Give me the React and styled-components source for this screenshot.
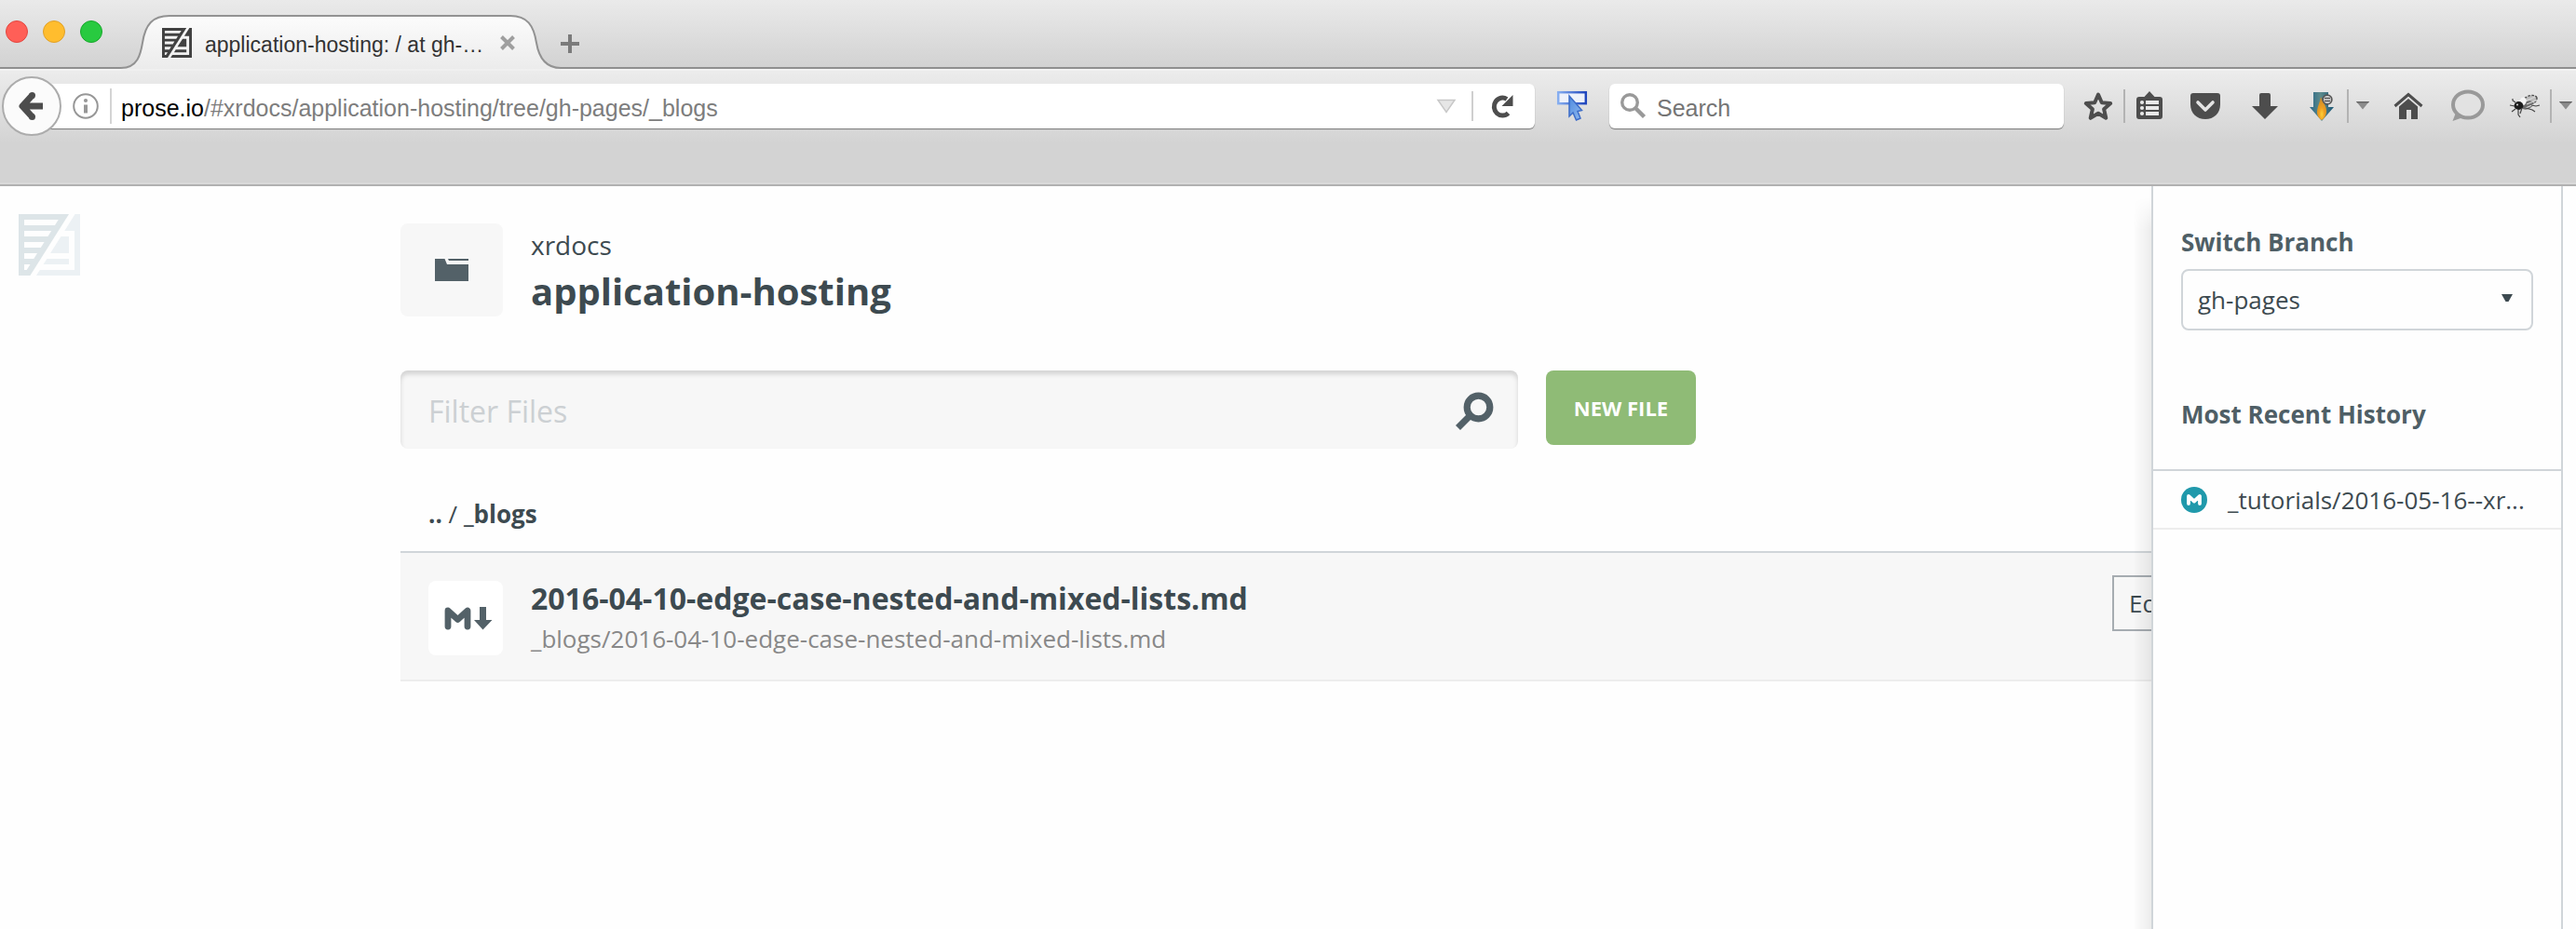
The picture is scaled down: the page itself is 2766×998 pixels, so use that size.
import React from "react";
import styled, { createGlobalStyle } from "styled-components";

const ink = "#3d4a50";
const slate = "#536168";
const line = "#d0d5d9";
const glyph = "#4d4d4d";

const GlobalStyle = createGlobalStyle`
  * { box-sizing: border-box; }
  body { margin: 0; background: #fefefe; overflow: hidden; }
  svg { display: block; flex: none; overflow: visible; }
  h1, h2, p { margin: 0; }
`;

const Window = styled.div`
  display: flex;
  flex-direction: column;
  width: 2766px;
  height: 998px;
  overflow: hidden;
  font-family: "Open Sans", sans-serif;
  color: ${ink};
`;

/* Browser chrome */

const TitleBar = styled.div`
  display: flex;
  flex: none;
  height: 74px;
  background: linear-gradient(#eaeaea, #d2d2d2 72px);
  border-bottom: 2px solid #8f8f8f;
  font-family: "Liberation Sans", sans-serif;
`;

const Lights = styled.div`
  display: flex;
  gap: 16px;
  width: 120px;
  padding: 22px 0 0 6px;
`;

const Light = styled.span`
  width: 24px;
  height: 24px;
  border-radius: 50%;
  background: ${(p) => p.$fill};
  border: 1px solid ${(p) => p.$edge};
`;

const Tab = styled.div`
  position: relative;
  display: flex;
  align-items: center;
  width: 482px;
  height: 76px;
  padding: 16px 0 0 54px;
`;

const TabShape = styled.svg`
  position: absolute;
  left: 0;
  top: 0;
`;

const TabTitle = styled.span`
  position: relative;
  width: 316px;
  margin-left: 14px;
  padding-top: 3px;
  font-size: 23px;
  line-height: 30px;
  white-space: nowrap;
  color: #333;
`;

const OnTab = styled.span`
  position: relative;
`;

const NewTab = styled.div`
  padding-top: 37px;
`;

const NavBar = styled.div`
  display: flex;
  flex: none;
  align-items: flex-start;
  height: 126px;
  padding: 14px 0 0 2px;
  background: linear-gradient(#ececec, #d3d3d3 78px);
  border-top: 2px solid #f3f3f3;
  border-bottom: 2px solid #b1b1b1;
  box-shadow: inset 0 -2px #d9d9d9;
  font-family: "Liberation Sans", sans-serif;
`;

const Tools = styled.div`
  display: flex;
  align-items: center;
  height: 48px;
`;

const BackButton = styled.div`
  position: relative;
  display: flex;
  align-items: center;
  justify-content: center;
  flex: none;
  width: 64px;
  height: 64px;
  border-radius: 50%;
  border: 2px solid #acacac;
  background: #fbfbfb;
`;

const Field = styled.div`
  display: flex;
  align-items: center;
  flex: none;
  width: ${(p) => p.$width}px;
  height: 48px;
  margin-left: ${(p) => p.$gap}px;
  padding-left: ${(p) => p.$pad}px;
  background: #fff;
  border-radius: 6px;
  box-shadow: 0 1px 1px rgba(0, 0, 0, 0.45);
  font-size: 25px;
  line-height: 32px;
  white-space: nowrap;
  color: #7d7d7d;
`;

const Address = styled.span`
  width: 1413px;
  margin-left: 10px;
  padding-top: 3px;
  b {
    font-weight: 400;
    color: #000;
  }
`;

const SearchLabel = styled.span`
  margin-left: 11px;
  padding-top: 3px;
  color: #757575;
`;

const Rule = styled.span`
  flex: none;
  width: 2px;
  height: ${(p) => p.$height || 36}px;
  margin-left: ${(p) => p.$gap}px;
  background: ${(p) => p.$color || "#b3b3b3"};
`;

const ToolIcon = styled.svg.attrs((p) => ({
  width: p.$w,
  height: 36,
  viewBox: `0 0 ${p.$w} 36`,
}))`
  margin-left: ${(p) => p.$gap}px;
`;

/* Page */

const Page = styled.div`
  display: flex;
  flex: 1;
  min-height: 0;
`;

const Rail = styled.div`
  flex: none;
  width: 430px;
  padding: 30px 0 0 20px;
`;

const Main = styled.main`
  flex: 1;
  min-width: 0;
  overflow: hidden;
  padding-top: 40px;
`;

const ProjectHeader = styled.header`
  display: flex;
  gap: 30px;
  height: 100px;
`;

const ProjectIcon = styled.div`
  display: flex;
  align-items: center;
  justify-content: center;
  width: 110px;
  height: 100px;
  border-radius: 8px;
  background: #f7f7f7;
`;

const Owner = styled.p`
  font-size: 28px;
  line-height: 46px;
`;

const ProjectName = styled.h1`
  font-size: 40px;
  font-weight: 700;
  line-height: 54px;
`;

const FilterRow = styled.div`
  display: flex;
  align-items: flex-start;
  gap: 30px;
  margin-top: 58px;
`;

const FilterBox = styled.div`
  display: flex;
  align-items: center;
  justify-content: space-between;
  width: 1200px;
  height: 84px;
  padding: 3px 26px 0 30px;
  border-radius: 8px;
  background: #f7f7f7;
  box-shadow: inset 0 4px 5px rgba(0, 0, 0, 0.15);
  font-size: 32px;
  line-height: 44px;
  color: #ccd0d3;
`;

const NewFile = styled.div`
  width: 161px;
  height: 80px;
  border-radius: 8px;
  background: #8fbb76;
  color: #fff;
  font-size: 22px;
  font-weight: 700;
  line-height: 81px;
  text-align: center;
`;

const Crumbs = styled.div`
  margin-top: 50px;
  padding: 0 0 20px 30px;
  width: 1996px;
  border-bottom: 2px solid ${line};
  font-size: 26px;
  line-height: 40px;
`;

const FileRow = styled.div`
  display: flex;
  width: 1996px;
  height: 138px;
  padding: 24px 30px 0;
  border-bottom: 2px solid #ededed;
  background: #f7f7f7;
`;

const FileIcon = styled.div`
  display: flex;
  align-items: center;
  justify-content: center;
  width: 80px;
  height: 80px;
  margin: 6px 30px 0 0;
  padding-left: 6px;
  border-radius: 8px;
  background: #fff;
`;

const FileText = styled.div`
  padding-top: 3px;
  white-space: nowrap;
`;

const FileName = styled.h2`
  font-size: 32px;
  font-weight: 700;
  line-height: 43px;
`;

const FilePath = styled.p`
  font-size: 26px;
  line-height: 44px;
  color: #888;
`;

const EditButton = styled.div`
  width: 128px;
  height: 60px;
  margin-left: auto;
  padding-left: 16px;
  border: 2px solid #a6acb1;
  font-size: 26px;
  line-height: 56px;
`;

const Drawer = styled.aside`
  position: relative;
  flex: none;
  width: 442px;
  margin-right: 14px;
  padding-top: 40px;
  border-left: 2px solid ${line};
  border-right: 2px solid ${line};
  background: #fefefe;
  &::before {
    content: "";
    position: absolute;
    top: 12px;
    bottom: 0;
    left: -22px;
    width: 20px;
    background: linear-gradient(to right, rgba(0, 0, 0, 0), rgba(0, 0, 0, 0.07));
    mask-image: linear-gradient(transparent, #000 36px);
  }
`;

const DrawerTitle = styled.h2`
  margin: 0 30px;
  font-size: 26px;
  font-weight: 700;
  line-height: 40px;
  color: #4f5f66;
`;

const BranchSelect = styled.div`
  display: flex;
  align-items: center;
  justify-content: space-between;
  width: 378px;
  height: 66px;
  margin: 9px 0 70px 30px;
  padding: 0 20px 0 16px;
  border: 2px solid ${line};
  border-radius: 8px;
  font-size: 26px;
  line-height: 40px;
  svg {
    margin-bottom: 4px;
  }
`;

const History = styled.div`
  margin-top: 39px;
  border-top: 2px solid ${line};
`;

const HistoryItem = styled.div`
  display: flex;
  align-items: center;
  gap: 22px;
  height: 63px;
  padding-left: 30px;
  border-bottom: 2px solid #ededed;
  font-size: 26px;
  line-height: 40px;
  white-space: nowrap;
`;

function ProseMark({ size, left, right, paper }) {
  return (
    <svg width={size} height={size} viewBox="0 0 66 66">
      <path d="M0 0H54L12.4 66H0Z" fill={left} />
      <path
        d="M6 6H42.7L39 12H6ZM6 18H35.2L31.4 24H6ZM6 30H27.6L23.8 36H6ZM6 42H20L16.3 48H6ZM6 54H12.5L8.7 60H6Z"
        fill={paper}
      />
      <path
        d="M60.6 0H66V66H19L22.8 60H60V18H49.3Z M45.5 24H54V42H34.1Z M30.4 48H54V54H26.6Z"
        fill={right}
      />
    </svg>
  );
}

function TabOutline() {
  const edge =
    "M10 73C28 73 31 58 33 46C36 26 44 17 62 17H428C446 17 453 27 456 46C458 58 463 73 482 73";
  return (
    <TabShape width="482" height="76">
      <defs>
        <linearGradient id="tab" x1="0" y1="0" x2="0" y2="1">
          <stop offset="0" stopColor="#fcfcfc" />
          <stop offset="1" stopColor="#ebebeb" />
        </linearGradient>
      </defs>
      <path d={`${edge}V76H10Z`} fill="url(#tab)" />
      <path d="M10 74H482V76H10Z" fill="#f0f0f0" />
      <path d={edge} fill="none" stroke="#929292" strokeWidth="2" />
    </TabShape>
  );
}

function DropArrow({ gap }) {
  return (
    <ToolIcon $w={14} $gap={gap}>
      <path d="M0 13H14L7 21.5Z" fill="#8c8c8c" />
      <path d="M0 13H14L13 14.5H1Z" fill="#666" />
    </ToolIcon>
  );
}

function Toolbar() {
  return (
    <>
      <ToolIcon $w={34} $gap={20}>
        <path
          d="M17 5.5L20.8 14.2L30.2 15L23.1 21.3L25.3 30.8L17 25.8L8.7 30.8L10.9 21.3L3.8 15L13.2 14.2Z"
          fill="none"
          stroke={glyph}
          strokeWidth="4"
          strokeLinejoin="round"
        />
      </ToolIcon>
      <Rule $gap={10} />
      <ToolIcon $w={28} $gap={12}>
        <path
          d="M3 8H8.5L14 2L19.5 8H25Q28 8 28 11V29Q28 32 25 32H3Q0 32 0 29V11Q0 8 3 8Z"
          fill={glyph}
        />
        <path d="M10 12H24V16H10ZM10 18H24V22H10ZM10 24H24V28H10Z" fill="#e9e9e9" />
        <circle cx="6" cy="14" r="2.1" fill="#e9e9e9" />
        <circle cx="6" cy="20" r="2.1" fill="#e9e9e9" />
        <circle cx="6" cy="26" r="2.1" fill="#e9e9e9" />
      </ToolIcon>
      <ToolIcon $w={32} $gap={30}>
        <path d="M3 4H29Q32 4 32 7V16C32 26 25 32 16 32S0 26 0 16V7Q0 4 3 4Z" fill={glyph} />
        <path
          d="M8 14L16 22L24 14"
          fill="none"
          stroke="#e4e4e4"
          strokeWidth="3.6"
          strokeLinecap="round"
          strokeLinejoin="round"
        />
      </ToolIcon>
      <ToolIcon $w={28} $gap={34}>
        <path d="M10 4H18Q20 4 20 6V18H28L14 32L0 18H8V6Q8 4 10 4Z" fill={glyph} />
      </ToolIcon>
      <ToolIcon $w={28} $gap={33}>
        <defs>
          <linearGradient id="steel" x1="0" y1="0" x2="1" y2="0">
            <stop offset="0" stopColor="#2a6788" />
            <stop offset=".45" stopColor="#5d8b8c" />
            <stop offset="1" stopColor="#1c5878" />
          </linearGradient>
          <radialGradient id="flame" cx=".5" cy=".75" r=".7">
            <stop offset="0" stopColor="#fdd23a" />
            <stop offset=".4" stopColor="#f0a020" />
            <stop offset="1" stopColor="#c8892c" />
          </radialGradient>
        </defs>
        <path d="M5 3H21V19H27L14 34L1 19H5Z" fill="url(#steel)" />
        <path
          d="M13 8C15 14 20 18 19 25C18 30 15.5 32 14 33C11 31 8.5 28 9 23C9.5 18 12 14 13 8Z"
          fill="url(#flame)"
        />
        <circle cx="20" cy="11" r="4.8" fill="#ddd" stroke="#555" strokeWidth="1.8" />
        <path d="M17 9.5H23M17 12.5H23" stroke="#555" strokeWidth="1.3" />
      </ToolIcon>
      <Rule $gap={13} />
      <DropArrow gap={8} />
      <ToolIcon $w={32} $gap={26}>
        <path d="M1.5 18L16 5.5L30.5 18" fill="none" stroke={glyph} strokeWidth="3" />
        <path d="M16 10L26 18.5V32H19V22H14V32H6V18.5Z" fill={glyph} />
      </ToolIcon>
      <ToolIcon $w={37} $gap={29}>
        <ellipse cx="19" cy="16.5" rx="16" ry="14" fill="#e2e2e2" stroke="#999" strokeWidth="4" />
        <path d="M6 25L2.500 34L14 30Z" fill="#999" />
      </ToolIcon>
      <ToolIcon $w={34} $gap={26}>
        <ellipse cx="22" cy="12" rx="9" ry="5" transform="rotate(-24 22 12)" fill="#bdbdbd" />
        <ellipse
          cx="22"
          cy="12"
          rx="8.5"
          ry="4.8"
          transform="rotate(-24 22 12)"
          fill="none"
          stroke="#4a4a4a"
          strokeWidth="1.4"
          strokeDasharray="2.5 1.5"
        />
        <ellipse cx="20" cy="17" rx="7" ry="4" transform="rotate(-24 20 17)" fill="#6c6c6c" />
        <path d="M17 13L28 8M19 16L29 12M18 20L27 16" stroke="#d9d9d9" strokeWidth="1.2" />
        <ellipse cx="15" cy="13" rx="3.6" ry="4.6" transform="rotate(20 15 13)" fill="#f5f5f5" />
        <ellipse cx="10.500" cy="17.500" rx="5" ry="4.400" fill="#1c1c1c" />
        <circle cx="9" cy="16.500" r="1.100" fill="#ccc" />
        <path
          d="M7 14L4 12V10M6 18L1 17M7 21L3 24M10 22V27L12 30M14 20L12 26M18 20L25 22L28 24M24 17L29 18L33 17"
          fill="none"
          stroke="#444"
          strokeWidth="1.2"
        />
      </ToolIcon>
      <Rule $gap={10} />
      <DropArrow gap={8} />
    </>
  );
}

export default function App() {
  return (
    <Window>
      <GlobalStyle />
      <TitleBar>
        <Lights>
          <Light $fill="#ff5f57" $edge="#e2463f" />
          <Light $fill="#ffbd2e" $edge="#e0a028" />
          <Light $fill="#28ca40" $edge="#17a82b" />
        </Lights>
        <Tab>
          <TabOutline />
          <OnTab>
            <ProseMark size={32} left="#414141" right="#414141" paper="#f4f4f4" />
          </OnTab>
          <TabTitle>application-hosting: / at gh-…</TabTitle>
          <OnTab>
            <svg width="18" height="18" viewBox="0 0 18 18">
              <path d="M2.5 2.5L15.5 15.5M15.5 2.5L2.5 15.5" stroke="#9f9f9f" strokeWidth="4" />
            </svg>
          </OnTab>
        </Tab>
        <NewTab>
          <svg width="20" height="20" viewBox="0 0 20 20">
            <path d="M10 0V20M0 10H20" stroke="#7b7b7b" strokeWidth="4" />
          </svg>
        </NewTab>
      </TitleBar>

      <NavBar>
        <Tools>
          <BackButton>
            <svg width="28" height="32" viewBox="0 0 28 32">
              <path
                d="M14.5 4.5L4 16L14.5 27.5M4.5 16H26"
                fill="none"
                stroke={glyph}
                strokeWidth="7"
                strokeLinejoin="round"
              />
              <circle cx="14.500" cy="4.500" r="3.500" fill={glyph} />
              <circle cx="14.500" cy="27.500" r="3.500" fill={glyph} />
            </svg>
          </BackButton>
          <Field $width={1598} $gap={-16} $pad={28}>
            <svg width="28" height="28" viewBox="0 0 28 28">
              <circle cx="14" cy="14" r="12.800" fill="none" stroke="#979797" strokeWidth="2" />
              <circle cx="14" cy="8" r="2.100" fill="#979797" />
              <path d="M14 12.5V21.5" stroke="#979797" strokeWidth="4" />
            </svg>
            <Rule $gap={12} $height={38} $color="#d4d4d4" />
            <Address>
              <b>prose.io</b>/#xrdocs/application-hosting/tree/gh-pages/_blogs
            </Address>
            <svg width="20" height="16" viewBox="0 0 20 16">
              <path d="M1 1.5H19L10 14.5Z" fill="#e6e6e6" stroke="#c8c8c8" strokeWidth="1.500" />
            </svg>
            <Rule $gap={17} $height={32} $color="#cfcfcf" />
            <ToolIcon $w={24} $gap={19}>
              <path
                d="M18.500 25.500A9 9.500 0 1 1 17 10.500"
                fill="none"
                stroke={glyph}
                strokeWidth="5"
              />
              <path d="M23.500 6V18H11.500Z" fill={glyph} />
            </ToolIcon>
          </Field>
          <ToolIcon $w={32} $gap={24}>
            <defs>
              <linearGradient id="frame" x1="0" y1="0" x2="1" y2="0">
                <stop offset="0" stopColor="#86aef0" />
                <stop offset="1" stopColor="#1f46bd" />
              </linearGradient>
              <linearGradient id="pointer" x1="0" y1="0" x2="1" y2="1">
                <stop offset="0" stopColor="#4f8ade" />
                <stop offset="1" stopColor="#8fb9ef" />
              </linearGradient>
            </defs>
            <rect
              x="1.200"
              y="3.200"
              width="29.600"
              height="12"
              fill="#eef2fb"
              stroke="url(#frame)"
              strokeWidth="2.500"
            />
            <path
              d="M13 7V29L17 25L20.500 33L25 31L22 23.500L26.500 22.500Z"
              fill="url(#pointer)"
              stroke="#3c6cc8"
              strokeWidth="1.500"
            />
          </ToolIcon>
          <Field $width={488} $gap={24} $pad={12}>
            <svg width="28" height="28" viewBox="0 0 28 28">
              <circle cx="10" cy="10" r="8.300" fill="none" stroke="#999" strokeWidth="3.400" />
              <path d="M16 16L25.500 25.500" stroke="#999" strokeWidth="4.400" />
            </svg>
            <SearchLabel>Search</SearchLabel>
          </Field>
          <Toolbar />
        </Tools>
      </NavBar>

      <Page>
        <Rail>
          <ProseMark size={66} left="#dde5e8" right="#ecf1f4" paper="#fefefe" />
        </Rail>
        <Main>
          <ProjectHeader>
            <ProjectIcon>
              <svg width="36" height="24" viewBox="0 0 36 24">
                <path d="M0 0H10.500L13 6H36V24H0ZM14 0H36V2H15Z" fill={slate} />
              </svg>
            </ProjectIcon>
            <div>
              <Owner>xrdocs</Owner>
              <ProjectName>application-hosting</ProjectName>
            </div>
          </ProjectHeader>
          <FilterRow>
            <FilterBox>
              <span>Filter Files</span>
              <svg width="42" height="42" viewBox="0 0 42 42">
                <circle cx="25.500" cy="16.500" r="12.300" fill="none" stroke={slate} strokeWidth="7.200" />
                <path d="M16.500 25.500L3.500 38.500" stroke={slate} strokeWidth="7" />
              </svg>
            </FilterBox>
            <NewFile>NEW FILE</NewFile>
          </FilterRow>
          <Crumbs>
            <b>..</b> / <b>_blogs</b>
          </Crumbs>
          <FileRow>
            <FileIcon>
              <svg width="52" height="24" viewBox="0 0 52 24">
                <path
                  d="M4 21V4L14.500 13.500L25 4V21"
                  fill="none"
                  stroke={slate}
                  strokeWidth="6.800"
                  strokeLinejoin="round"
                  strokeLinecap="round"
                />
                <path d="M38 0H45V14H51.500L41.500 24.500L32 14H38Z" fill={slate} />
              </svg>
            </FileIcon>
            <FileText>
              <FileName>2016-04-10-edge-case-nested-and-mixed-lists.md</FileName>
              <FilePath>_blogs/2016-04-10-edge-case-nested-and-mixed-lists.md</FilePath>
            </FileText>
            <EditButton>Edit</EditButton>
          </FileRow>
        </Main>
        <Drawer>
          <DrawerTitle>Switch Branch</DrawerTitle>
          <BranchSelect>
            gh-pages
            <svg width="12" height="8" viewBox="0 0 12 8">
              <path d="M0 0H12L7.500 8H4.500Z" fill={ink} />
            </svg>
          </BranchSelect>
          <DrawerTitle>Most Recent History</DrawerTitle>
          <History>
            <HistoryItem>
              <svg width="28" height="28" viewBox="0 0 28 28">
                <circle cx="14" cy="14" r="14" fill="#2099ab" />
                <path
                  d="M8 18V10L14 15.500L20 10V18"
                  fill="none"
                  stroke="#fff"
                  strokeWidth="3.800"
                  strokeLinejoin="round"
                  strokeLinecap="round"
                />
              </svg>
              _tutorials/2016-05-16--xr...
            </HistoryItem>
          </History>
        </Drawer>
      </Page>
    </Window>
  );
}
